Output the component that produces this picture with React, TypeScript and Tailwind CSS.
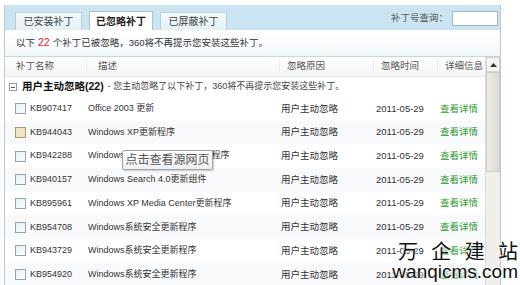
import * as React from "react";

const rows = [
  { kb: "KB907417", desc: "Office 2003 更新" },
  { kb: "KB944043", desc: "Windows XP更新程序", hover: true },
  { kb: "KB942288", desc: "Windows Internet Explorer更新程序" },
  { kb: "KB940157", desc: "Windows Search 4.0更新组件" },
  { kb: "KB895961", desc: "Windows XP Media Center更新程序" },
  { kb: "KB954708", desc: "Windows系统安全更新程序" },
  { kb: "KB943729", desc: "Windows系统安全更新程序" },
  { kb: "KB954920", desc: "Windows系统安全更新程序" },
];

const font = "font-['Tahoma','Liberation_Sans','Noto_Sans_CJK_SC',sans-serif]";

function Tab({ label, active }: { label: string; active?: boolean }) {
  return (
    <div
      className={
        active
          ? "flex h-[19px] w-[64px] items-center justify-center border border-b-0 border-[#a9c3d3] bg-white text-[10px] font-bold text-[#222]"
          : "flex h-[18px] w-[67px] items-center justify-center border border-b-0 border-[#b7cfdd] bg-gradient-to-b from-[#f4f9fc] to-[#e3eff7] text-[10px] text-[#444]"
      }
    >
      {label}
    </div>
  );
}

export default function App() {
  return (
    <div className={`relative h-[285px] w-[520px] overflow-hidden bg-white pl-[4px] pt-[5px] ${font}`}>
      <div className="w-[497px] border-l border-r border-[#b4cad8]">
        {/* tab bar */}
        <div className="flex h-[25px] items-end bg-[#cbe4f2] pl-[10px]">
          <div className="flex items-end gap-[7px]">
            <Tab label="已安装补丁" />
            <Tab label="已忽略补丁" active />
            <Tab label="已屏蔽补丁" />
          </div>
          <div className="ml-auto flex items-center self-center pr-[2px] pt-[2px]">
            <span className="mr-[4px] text-[9.5px] text-[#555]">补丁号查询：</span>
            <div className="h-[15px] w-[46px] border border-[#9fb8c8] bg-white" />
          </div>
        </div>

        {/* info line */}
        <div className="flex h-[27px] items-center border-b border-[#c9d6de] bg-gradient-to-b from-white to-[#f3f8fb] pl-[11px] text-[9.5px] text-[#333]">
          以下 <span className="mx-[3px] text-[10.5px] text-[#d42a2a]">22</span> 个补丁已被忽略，360将不再提示您安装这些补丁。
        </div>

        {/* table */}
        <div className="flex">
          <div className="w-[480px]">
            <div className="flex h-[20px] items-center border-b border-[#e2e8ec] bg-gradient-to-b from-white to-[#f2f5f7] text-[9.5px] text-[#555]">
              <div className="w-[82px] border-r border-[#eceff1] pl-[11px]">补丁名称</div>
              <div className="w-[193px] border-r border-[#eceff1] pl-[11px]">描述</div>
              <div className="w-[94px] border-r border-[#eceff1] pl-[7px]">忽略原因</div>
              <div className="w-[64px] border-r border-[#eceff1] pl-[7px]">忽略时间</div>
              <div className="pl-[7px]">详细信息</div>
            </div>
            <div className="flex h-[20px] items-center pl-[4px] text-[9px] text-[#444]">
              <span className="mr-[5px] flex h-[8px] w-[8px] items-center justify-center border border-[#8a9aa6]">
                <span className="h-px w-[4px] bg-[#555]" />
              </span>
              <span className="text-[10.5px] font-bold text-[#111]">用户主动忽略(22)</span>
              <span className="ml-[4px]">- 您主动忽略了以下补丁，360将不再提示您安装这些补丁。</span>
            </div>
            {rows.map((r, i) => (
              <div
                key={r.kb}
                className={`flex h-[23.7px] items-center text-[9.5px] text-[#333] ${i % 2 === 1 ? "bg-[#f8f9fa]" : "bg-white"}`}
              >
                <div className="flex w-[83px] items-center pl-[10px]">
                  <span
                    className={
                      r.hover
                        ? "h-[11px] w-[11px] border border-[#a8996b] bg-[#efe4c4]"
                        : "h-[11px] w-[11px] border border-[#8fa3b1] bg-gradient-to-br from-[#e6edf2] to-white"
                    }
                  />
                  <span className="ml-[4px] text-[9px]">{r.kb}</span>
                </div>
                <div className="w-[193px] text-[9px]">{r.desc}</div>
                <div className="w-[95px]">用户主动忽略</div>
                <div className="w-[64px]">2011-05-29</div>
                <div className="text-[#2f9a2f]">查看详情</div>
              </div>
            ))}
          </div>
          {/* scrollbar */}
          <div className="flex w-[15px] flex-col border-l border-[#dcdcd6] bg-[#f0efea]">
            <div className="flex h-[15px] items-center justify-center border border-[#d5d3cc] bg-[#f5f4ef]">
              <svg width="7" height="4" viewBox="0 0 7 4">
                <path d="M0 4 L3.5 0 L7 4 Z" fill="#333" />
              </svg>
            </div>
            <div className="h-[100px] border border-[#cfccc2] bg-gradient-to-r from-[#ecebe5] to-[#dedbd2]" />
          </div>
        </div>
      </div>

      {/* tooltip */}
      <div className="absolute left-[122px] top-[150px] flex h-[20px] w-[91px] items-center justify-center rounded-[2px] border border-[#9aa3aa] bg-gradient-to-b from-white to-[#eef0f3] text-[12px] text-[#555] shadow-[1px_1px_2px_rgba(0,0,0,0.2)]">
        点击查看源网页
      </div>

      {/* watermark */}
      <div className="absolute left-[393px] top-[241px] flex w-[125px] flex-col items-end font-['Noto_Sans_CJK_SC',sans-serif] leading-none text-[#111] [text-shadow:0_0_2px_#fff,0_0_3px_#fff,0_0_3px_#fff]">
        <div className="flex w-[120px] justify-between text-[20px]">
          <span>万</span>
          <span>企</span>
          <span>建</span>
          <span>站</span>
        </div>
        <div className="mt-[1px] font-['Liberation_Sans',sans-serif] text-[19px]">wanqicms.com</div>
      </div>
    </div>
  );
}
